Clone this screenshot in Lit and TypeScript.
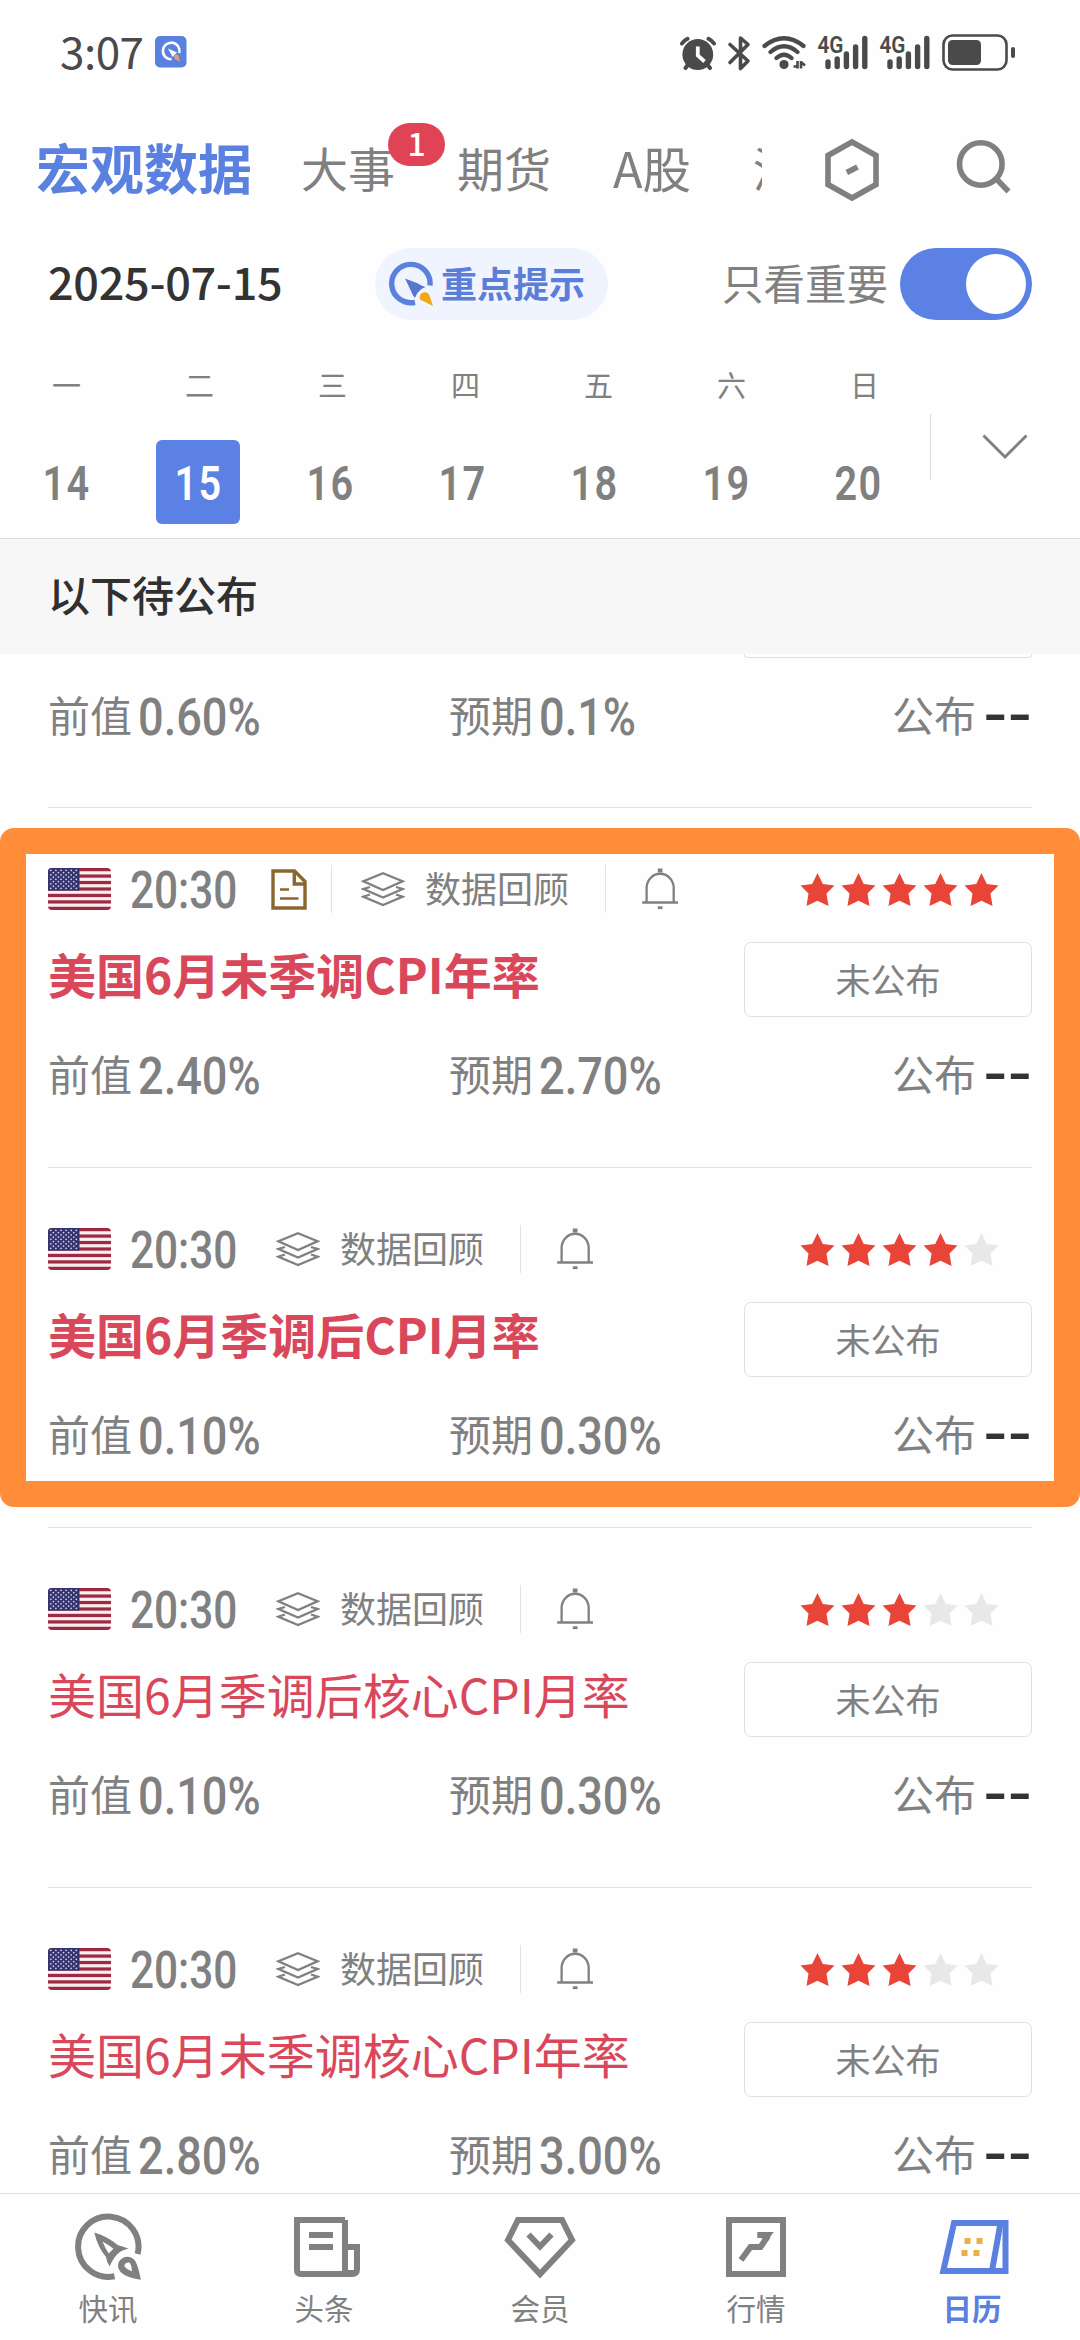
import { LitElement, html, svg, css, nothing } from "lit";
import { customElement, property } from "lit/decorators.js";

interface Indicator {
  title?: string;
  bold?: boolean;
  note?: boolean;
  stars?: number;
  prev: string;
  forecast: string;
}

// The first entry is scrolled under the section bar: only its lower part is drawn.
const INDICATORS: Indicator[] = [
  { prev: "0.60%", forecast: "0.1%" },
  { title: "美国6月未季调CPI年率", bold: true, note: true, stars: 5, prev: "2.40%", forecast: "2.70%" },
  { title: "美国6月季调后CPI月率", bold: true, stars: 4, prev: "0.10%", forecast: "0.30%" },
  { title: "美国6月季调后核心CPI月率", stars: 3, prev: "0.10%", forecast: "0.30%" },
  { title: "美国6月未季调核心CPI年率", stars: 3, prev: "2.80%", forecast: "3.00%" },
];

const WEEKDAYS = ["一", "二", "三", "四", "五", "六", "日"];
const DATES = ["14", "15", "16", "17", "18", "19", "20"];

const STAR = "M17 0 L22.3 11 L34 12.6 L26 20.6 L28 33 L17 27.8 L6 33 L8 20.6 L0 12.6 L11.7 11 Z";

const signal = (dx: number) => svg`
  <g transform="translate(${dx} 0)">
    <text x="817.500" y="51.500" font-family="Roboto, sans-serif" font-weight="600" font-size="23.500" textLength="26" lengthAdjust="spacingAndGlyphs" fill="#4a4a4a">4G</text>
    <g stroke="#4a4a4a" stroke-width="5.4" stroke-linecap="round">
      <path d="M828 61V65.5M837.2 58V65.5M846.4 53V65.5M855.6 46V65.5M864.8 37.5V65.5"/>
    </g>
  </g>`;

const statusIcons = html`<svg width="340" height="46" viewBox="680 28 340 46" fill="none">
  <circle cx="697.8" cy="53.5" r="15.4" fill="#4a4a4a"/>
  <path d="M697.8 45.5V54.5L704.5 60.5" stroke="#fff" stroke-width="3.8"/>
  <path d="M682 42.5Q684 39.5 687.5 37.8M714 42.5Q712 39.5 708.5 37.8M688.500 63L685.500 67M707 63L710 67" stroke="#4a4a4a" stroke-width="4" stroke-linecap="round"/>
  <path d="M730 43.500L748 60L740.500 67.500V37L748 43.500L730 61.500" stroke="#4a4a4a" stroke-width="3.6" stroke-linejoin="round" stroke-linecap="round"/>
  <path d="M764.500 45Q784 29.500 803.500 45M770.500 51Q784 39.500 797.500 51M776.500 57Q784 50.500 791.500 57" stroke="#4a4a4a" stroke-width="4.2" stroke-linecap="round"/>
  <circle cx="784" cy="63.5" r="4.6" fill="#4a4a4a"/>
  <path d="M797.500 60V67.500M793.500 65.500H798M801 60V67.500M801 61L805 64.500" stroke="#4a4a4a" stroke-width="2.6"/>
  ${signal(0)}${signal(62)}
  <rect x="943.500" y="34.500" width="63" height="34" rx="9" stroke="#4a4a4a" stroke-width="2.6"/>
  <rect x="948" y="39" width="33" height="25" rx="4.5" fill="#4a4a4a"/>
  <rect x="1011" y="46" width="4" height="11" rx="2" fill="#4a4a4a"/>
</svg>`;

const appBadge = html`<svg width="32" height="32" viewBox="0 0 32 32">
  <rect width="31.500" height="31.500" rx="5" fill="#5b81e0"/>
  <path d="M16.500 23.300A8.300 8.300 0 1 1 24.300 17" fill="none" stroke="#fff" stroke-width="2.6"/>
  <path d="M13 12.500L22 16.500L17.500 21Z" fill="#fff"/>
  <path d="M19 20.500Q22 17 23.500 20L25 25.500L20 23.500Z" fill="#e0a070"/>
</svg>`;

const rocketMark = html`<svg width="46" height="46" viewBox="388 261 46 46">
  <path d="M415 302.300A19.200 19.200 0 1 1 430 285.500" fill="none" stroke="#5b81dc" stroke-width="5.400"/>
  <path d="M405 278.500L418 283.500Q421 285.500 425.500 287Q417.500 290 415 298Q412.500 295.500 411 291Z" fill="#5577cc"/>
  <path d="M420 299.500Q418.500 293 424.500 292.300Q429 292.500 430 297L433 306Z" fill="#f0a818"/>
</svg>`;

const hexIcon = html`<svg width="56" height="64" viewBox="824 138 56 64" fill="none" stroke="#808080" stroke-width="5.600">
  <path d="M852 142L876 155.500V184.500L852 198L828 184.500V155.500Z"/><path d="M846.800 172.600L857.500 167"/>
</svg>`;

const searchIcon = html`<svg width="56" height="64" viewBox="956 138 56 64" fill="none" stroke="#808080" stroke-width="5.600">
  <circle cx="980.8" cy="164" r="21.300"/><path d="M996 178.500L1008.500 191.500"/>
</svg>`;

const flag = html`<svg class="flag" width="63" height="42" viewBox="0 0 63 42">
  <rect width="63" height="42" fill="#fbeef0"/>
  ${[0, 1, 2, 3, 4, 5, 6].map((i) => svg`<rect y=${i * 6.46} width="63" height="3.230" fill="#9c2a41"/>`)}
  <rect width="31.500" height="22.600" fill="#34336f"/>
  ${[0, 1, 2, 3, 4, 5, 6, 7, 8].map((r) =>
    [0, 1, 2, 3, 4, 5].slice(0, r % 2 ? 5 : 6).map(
      (c) => svg`<circle cx=${2.8 + c * 5.1 + (r % 2 ? 2.55 : 0)} cy=${2.3 + r * 2.25} r="0.85" fill="#d8d8ee"/>`,
    ),
  )}
</svg>`;

const noteIcon = html`<svg class="note" width="36" height="41" viewBox="271 869.5 36 41" fill="none" stroke="#8a672e" stroke-width="3.400">
  <path d="M273 871.500H294.500L305 882V908.500H273Z"/>
  <path d="M294.300 871.500V884.500H305.500"/><path d="M280 890H289M280 899H298.500" stroke-width="2.600"/>
</svg>`;

const layersIcon = html`<svg class="layers" width="44" height="36" viewBox="361 872 44 36" fill="none" stroke="#808080" stroke-width="2.300">
  <path d="M383 874.200L402.500 882.300L383 891L363.500 882.300Z"/>
  <path d="M370 888L363.500 890L383 898.500L402.500 890L396 888"/>
  <path d="M370 895.500L363.500 897.700L383 906L402.500 897.700L396 895.500"/>
</svg>`;

const bellIcon = html`<svg class="bell" width="36" height="42" viewBox="642 868.5 36 42" fill="none" stroke="#808080" stroke-width="2.300">
  <path d="M646.600 903V887.500A13.600 14.500 0 0 1 673.700 887.500V903"/>
  <path d="M642.200 903H678"/><path d="M657.800 871H662.500" stroke-width="4"/><path d="M657.800 908.200H662.500" stroke-width="2.800"/>
</svg>`;

const navIcons = {
  flash: html`<svg width="72" height="72" viewBox="72 2211 72 72" fill="none" stroke="#808080" stroke-width="6">
    <path d="M114.500 2276.300A30.200 30.200 0 1 1 137.600 2254"/>
    <path fill="#808080" stroke="none" fill-rule="evenodd" d="M94.300 2232.500Q106 2235.500 118 2245.200Q122 2246 128.500 2248.800Q116 2250.500 109.700 2266.500Q106.500 2261.500 106 2257Q97.500 2247 94.300 2232.500ZM102.500 2241.500Q104.500 2247 108.700 2253.500L113.500 2248.800Q108 2244.500 102.500 2241.500Z"/>
    <path fill="#808080" stroke="none" fill-rule="evenodd" d="M140.800 2279.800Q126 2277.500 120.500 2272Q116.500 2267 119 2261.500Q123 2255.800 129.500 2257Q134 2258 136 2262.500Q139 2269 140.800 2279.800ZM132 2271.200Q131.500 2265 129.500 2262.600Q125.500 2262 124.300 2265.500Q125.500 2269 132 2271.200Z"/>
  </svg>`,
  news: html`<svg width="72" height="72" viewBox="288 2211 72 72" fill="none" stroke="#808080" stroke-width="6">
    <path d="M345 2220H297V2270Q297 2274 301 2274H352Q357 2274 357 2269V2247H345"/>
    <path d="M345 2220V2270Q345 2274 348.500 2274Q351 2274 351 2270"/>
    <path d="M309 2235H333M309 2247H333"/>
  </svg>`,
  member: html`<svg width="78" height="72" viewBox="501 2211 78 72" fill="none" stroke="#808080" stroke-width="6">
    <path d="M518 2220H562L572 2240L540 2274L508 2240Z"/><path d="M528.500 2234.500L540 2246.500L551.500 2234.500"/>
  </svg>`,
  market: html`<svg width="72" height="72" viewBox="720 2211 72 72" fill="none" stroke="#808080" stroke-width="6">
    <rect x="729" y="2220" width="54" height="54"/>
    <path d="M741 2260L750.500 2247H760.500L768 2236"/><path d="M757.300 2232H773.800L765.500 2243L761.500 2238H757.300Z" fill="#808080" stroke="none"/>
  </svg>`,
  calendar: html`<svg width="78" height="72" viewBox="932.500 2211 78 72" fill="none" stroke="#5b81e0" stroke-width="6">
    <path d="M953.500 2223H1005V2271H942.800Z"/><path d="M1000 2223L991.500 2271"/>
    <path d="M964 2241H970M976 2241H982M961 2253H967M973 2253H979" stroke="#eab046"/>
  </svg>`,
};

const shared = css`
  * { box-sizing: border-box; }
  svg { display: block; flex: none; }
  .num {
    font-family: Roboto, "Liberation Sans", sans-serif;
    font-weight: 550;
    transform: scaleX(0.885);
    transform-origin: left center;
    white-space: nowrap;
  }
`;

@customElement("indicator-row")
export class IndicatorRow extends LitElement {
  @property({ attribute: false }) item!: Indicator;

  static styles = [
    shared,
    css`
      :host { display: block; flex: none; padding: 0 48px; color: #808080; }
      .row { height: 360px; padding-top: 57px; border-bottom: 1px solid #e2e2e2; display: flex; flex-direction: column; }
      .row.partial { height: 154px; padding-top: 0; }
      .remnant { align-self: flex-end; width: 288px; height: 4px; border: 1px solid #e0e0e0; border-top: none; border-radius: 0 0 7px 7px; flex: none; }
      .head { display: flex; align-items: center; height: 48px; padding-right: 33px; }
      .flag { border-radius: 4px; }
      .time { width: 120px; margin-left: 19px; font-size: 51px; line-height: 48px; padding-top: 3px; transform: scaleX(0.83); }
      .note { margin-left: 21px; }
      .line { width: 1px; height: 48px; background: #e2e2e2; flex: none; }
      .after-note { margin: 0 3px 0 24px; }
      .layers { margin-left: 26px; }
      .review { margin-left: 20px; width: 144px; font-size: 36px; line-height: 48px; padding-bottom: 4px; white-space: nowrap; }
      .after-review { margin: 0 36px; }
      .stars { margin-left: auto; }
      .main { display: flex; justify-content: space-between; margin-top: 29px; height: 75px; }
      .title { font-size: 48px; line-height: 62px; font-weight: 400; color: #d9485a; white-space: nowrap; }
      .title.bold { font-weight: 700; }
      .status { width: 288px; height: 75px; border: 1px solid #e0e0e0; border-radius: 7px; font-size: 35px; line-height: 71px; text-align: center; }
      .values { display: grid; grid-template-columns: 401px 1fr auto; margin-top: 28px; height: 60px; font-size: 42px; line-height: 56px; }
      .cell { display: flex; white-space: nowrap; }
      .value { margin-left: 6px; font-size: 51px; line-height: 63px; }
      .dash { margin-left: 7px; font-family: "DejaVu Sans", sans-serif; font-size: 68px; line-height: 54px; color: #333; width: 49px; }
    `,
  ];

  private renderTop() {
    const { title, bold, note, stars = 0 } = this.item;
    return html`
      <div class="head">
        ${flag}
        <span class="time num">20:30</span>
        ${note ? html`${noteIcon}<i class="line after-note"></i>` : nothing}
        ${layersIcon}
        <span class="review">数据回顾</span>
        <i class="line after-review"></i>
        ${bellIcon}
        <svg class="stars" width="199" height="33" viewBox="0 0 199 33">
          ${[0, 1, 2, 3, 4].map(
            (i) => svg`<path d=${STAR} transform="translate(${0.5 + i * 41} 0)" fill=${i < stars ? "#e94438" : "#e8e8e8"}/>`,
          )}
        </svg>
      </div>
      <div class="main">
        <div class="title ${bold ? "bold" : ""}">${title}</div>
        <div class="status">未公布</div>
      </div>`;
  }

  render() {
    const { title, prev, forecast } = this.item;
    return html`<div class="row ${title ? "" : "partial"}">
      ${title ? this.renderTop() : html`<div class="remnant"></div>`}
      <div class="values">
        <div class="cell">前值<span class="value num">${prev}</span></div>
        <div class="cell">预期<span class="value num">${forecast}</span></div>
        <div class="cell">公布<span class="dash">--</span></div>
      </div>
    </div>`;
  }
}

@customElement("app-root")
export class AppRoot extends LitElement {
  static styles = [
    shared,
    css`
      :host {
        display: flex; flex-direction: column; position: relative; width: 1080px; height: 2340px; overflow: hidden;
        background: #fefefe; color: #808080; font-family: "Noto Sans CJK SC", "Noto Sans", sans-serif;
      }
      .statusbar { display: flex; align-items: center; height: 104px; padding: 0 60px; flex: none; color: #4a4a4a; }
      .clock { font-size: 44px; line-height: 60px; width: 95px; letter-spacing: -0.5px; padding-bottom: 4px; }
      .sys { margin-left: auto; }
      .topbar { display: flex; align-items: center; height: 132px; padding: 0 68px 0 36px; flex: none; }
      .tabs { display: flex; align-items: center; gap: 62px; width: 726px; height: 90px; overflow: hidden; font-size: 47px; line-height: 70px; white-space: nowrap; padding-bottom: 6px; }
      .tab { flex: none; }
      .tab.on { font-size: 54px; font-weight: 700; color: #5b81e0; margin-right: -13px; }
      .tab.stock { font-size: 48.5px; }
      .topbar .hex { margin-left: 62px; }
      .topbar .find { margin-left: 76px; }
      .badge { position: absolute; left: 388px; top: 123px; width: 57px; height: 43px; border-radius: 22px; background: #e04355; color: #fff; font-size: 32px; font-weight: 500; line-height: 39px; text-align: center; }
      .filter { display: flex; align-items: center; height: 96px; padding: 0 48px; flex: none; }
      .date { font-size: 45px; font-weight: 500; line-height: 72px; color: #333; width: 327px; padding-bottom: 6px; letter-spacing: -0.3px; }
      .pill { display: flex; align-items: center; width: 233px; height: 72px; border-radius: 36px; background: #eff4fe; padding-left: 13px; color: #5b7fd8; font-size: 36px; font-weight: 700; line-height: 68px; }
      .pill span { margin-left: 7px; padding-bottom: 4px; white-space: nowrap; }
      .only { margin-left: auto; font-size: 41.5px; line-height: 72px; padding-bottom: 5px; }
      .toggle { width: 132px; height: 72px; border-radius: 36px; background: #5b81e4; margin-left: 12px; padding: 6px; display: flex; justify-content: flex-end; }
      .knob { width: 60px; height: 60px; border-radius: 50%; background: #fff; }
      .calendar { display: flex; height: 206px; flex: none; }
      .week { width: 930px; padding-top: 32px; }
      .names { display: grid; grid-template-columns: repeat(7, 133px); justify-items: center; font-size: 29px; line-height: 40px; height: 76px; width: 930px; }
      .dates { display: grid; grid-template-columns: repeat(7, 132px); justify-items: center; width: 930px; }
      .box { width: 84px; height: 84px; border-radius: 6px; display: flex; justify-content: center; }
      .box .num { font-size: 49px; line-height: 87px; transform-origin: center; font-weight: 650; transform: scaleX(0.81); letter-spacing: 1.5px; }
      .box.on { background: #5b81e4; color: #fff; }
      .expand { display: flex; align-items: center; margin-top: 82px; height: 66px; border-left: 1px solid #dedede; padding-left: 51px; }
      .section { height: 116px; flex: none; background: #f7f7f7; border-top: 1px solid #dfdfdf; padding-left: 48px; font-size: 42px; font-weight: 500; line-height: 110px; color: #303030; }
      .list { display: flex; flex-direction: column; height: 1539px; overflow: hidden; flex: none; }
      .frame { position: absolute; left: 0; top: 828px; width: 1080px; height: 679px; border: 26.5px solid #ff8d3a; border-radius: 14px; }
      .nav { display: grid; grid-template-columns: repeat(5, 216px); height: 147px; border-top: 1px solid #e0e0e0; flex: none; background: #fefefe; }
      .nav div { display: flex; flex-direction: column; align-items: center; padding-top: 17px; font-size: 29.5px; line-height: 40px; }
      .nav span { margin-top: 4px; }
      .nav .on { color: #5b81e0; font-weight: 700; }
    `,
  ];

  render() {
    return html`
      <div class="statusbar">
        <span class="clock">3:07</span>${appBadge}
        <div class="sys">${statusIcons}</div>
      </div>
      <div class="topbar">
        <div class="tabs">
          <span class="tab on">宏观数据</span><span class="tab">大事</span><span class="tab">期货</span>
          <span class="tab stock">A股</span><span class="tab">港股</span>
        </div>
        <div class="hex">${hexIcon}</div>
        <div class="find">${searchIcon}</div>
      </div>
      <span class="badge">1</span>
      <div class="filter">
        <span class="date">2025-07-15</span>
        <div class="pill">${rocketMark}<span>重点提示</span></div>
        <span class="only">只看重要</span>
        <div class="toggle"><i class="knob"></i></div>
      </div>
      <div class="calendar">
        <div class="week">
          <div class="names">${WEEKDAYS.map((name) => html`<span>${name}</span>`)}</div>
          <div class="dates">
            ${DATES.map((n) => html`<div class="box ${n === "15" ? "on" : ""}"><span class="num">${n}</span></div>`)}
          </div>
        </div>
        <div class="expand">
          <svg width="46" height="26" viewBox="0 0 46 26" fill="none" stroke="#808080" stroke-width="3"><path d="M1.500 1.500L23 23L44.500 1.500"/></svg>
        </div>
      </div>
      <div class="section">以下待公布</div>
      <div class="list">${INDICATORS.map((item) => html`<indicator-row .item=${item}></indicator-row>`)}</div>
      <div class="frame"></div>
      <div class="nav">
        <div>${navIcons.flash}<span>快讯</span></div>
        <div>${navIcons.news}<span>头条</span></div>
        <div>${navIcons.member}<span>会员</span></div>
        <div>${navIcons.market}<span>行情</span></div>
        <div class="on">${navIcons.calendar}<span>日历</span></div>
      </div>
    `;
  }
}
